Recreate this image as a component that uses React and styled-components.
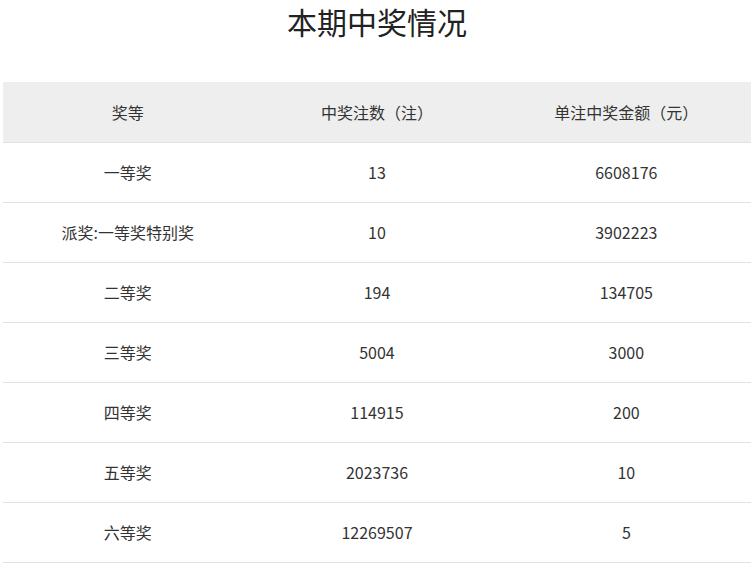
import React from 'react';
import styled, { createGlobalStyle } from 'styled-components';

const rows = [
    { level: '一等奖', count: '13', amount: '6608176' },
    { level: '派奖:一等奖特别奖', count: '10', amount: '3902223' },
    { level: '二等奖', count: '194', amount: '134705' },
    { level: '三等奖', count: '5004', amount: '3000' },
    { level: '四等奖', count: '114915', amount: '200' },
    { level: '五等奖', count: '2023736', amount: '10' },
    { level: '六等奖', count: '12269507', amount: '5' },
];

const App = () => {
    return (
        <>
            <GlobalStyle />
            <Page>
                <Title>本期中奖情况</Title>
                <Table>
                    <thead>
                        <HeadRow>
                            <HeadCell>奖等</HeadCell>
                            <HeadCell>中奖注数（注）</HeadCell>
                            <HeadCell>单注中奖金额（元）</HeadCell>
                        </HeadRow>
                    </thead>
                    <tbody>
                        {rows.map((row) => (
                            <Row key={row.level}>
                                <Cell>{row.level}</Cell>
                                <Cell>{row.count}</Cell>
                                <Cell>{row.amount}</Cell>
                            </Row>
                        ))}
                    </tbody>
                </Table>
            </Page>
        </>
    );
};

export default App;

const GlobalStyle = createGlobalStyle`
    body {
        margin : 0;
        background : #ffffff;
        font-family : "Noto Sans CJK SC", "Noto Sans", sans-serif;
        color : #333333;
    }
`
const Page = styled.div`
    width : 754px;
    padding : 0 3px;
    box-sizing : border-box;
`
const Title = styled.h1`
    margin : 0;
    height : 82px;
    padding-top : 1px;
    box-sizing : border-box;
    text-align : center;
    font-size : 30px;
    font-weight : 400;
    line-height : 40px;
    color : #222222;
`
const Table = styled.table`
    width : 748px;
    border-collapse : collapse;
    table-layout : fixed;
`
const HeadRow = styled.tr`
    height : 60px;
    background-color : #eeeeee;
`
const HeadCell = styled.th`
    padding : 0;
    font-size : 16px;
    font-weight : 400;
    text-align : center;
    color : #333333;
    border-bottom : 1px solid #e2e2e2;
`
const Row = styled.tr`
    height : 60px;
`
const Cell = styled.td`
    padding : 0;
    font-size : 16px;
    text-align : center;
    color : #333333;
    border-bottom : 1px solid #e2e2e2;
`
